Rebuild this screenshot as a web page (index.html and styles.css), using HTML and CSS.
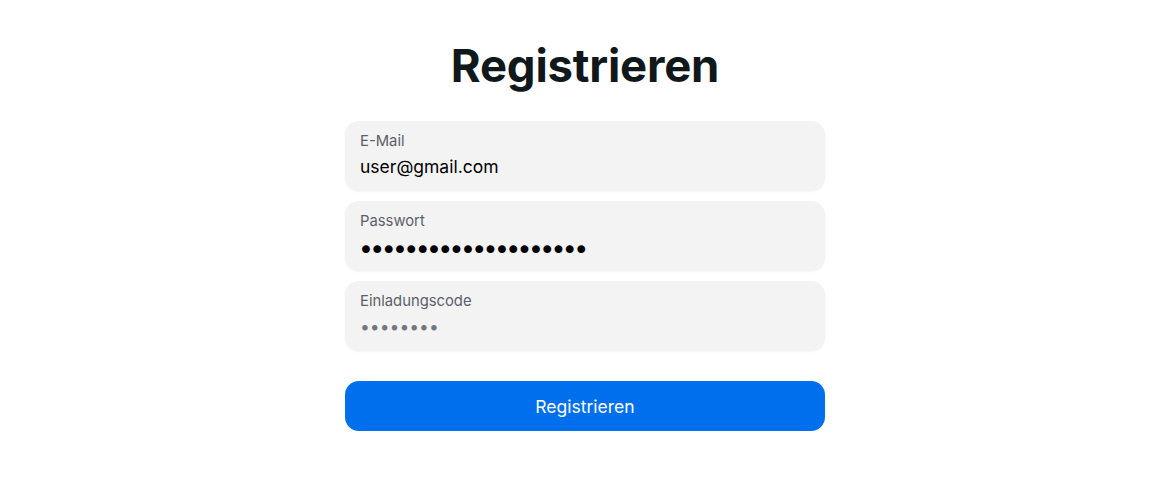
FILE: index.html
```html
<!DOCTYPE html>
<html lang="de">
<head>
<meta charset="utf-8">
<title>Registrieren</title>
<link rel="stylesheet" href="styles.css">
</head>
<body>
<main class="page">
  <form class="form">
    <h1 class="title">Registrieren</h1>
    <label class="field">
      <span class="label">E-Mail</span>
      <input class="input" type="email" value="user@gmail.com">
    </label>
    <label class="field">
      <span class="label">Passwort</span>
      <input class="input input-password" type="password" value="abcdefghijklmnopqrst">
    </label>
    <label class="field">
      <span class="label">Einladungscode</span>
      <input class="input" type="text" placeholder="••••••••">
    </label>
    <button class="button" type="button">Registrieren</button>
  </form>
</main>
</body>
</html>
```

FILE: styles.css
```css
* { box-sizing: border-box; }
html, body { margin: 0; padding: 0; background: #ffffff; }
body { font-family: Inter, "Noto Sans", sans-serif; }
.page {
  display: flex;
  justify-content: center;
  padding: 36px 0 0 13px;
}
.form {
  width: 480px;
  display: flex;
  flex-direction: column;
  gap: 10px;
}
.title {
  margin: 0 0 15px;
  text-align: center;
  font-size: 45.5px;
  font-weight: 700;
  line-height: 60px;
  color: #11181c;
  letter-spacing: -0.2px;
}
.field {
  display: flex;
  flex-direction: column;
  height: 70px;
  padding: 10px 15px 0;
  background: #f3f3f3;
  border-radius: 14px;
  box-shadow: 0 1px 2px rgba(0,0,0,0.05);
}
.label {
  font-size: 14.8px;
  line-height: 20px;
  color: #5b5f6b;
}
.input {
  border: 0;
  outline: 0;
  background: transparent;
  padding: 0;
  margin-top: 4px;
  font-family: inherit;
  font-size: 17.5px;
  line-height: 24px;
  height: 24px;
  color: #000;
}
.input-password {
  font-family: "DejaVu Sans", sans-serif;
  font-size: 27px;
  letter-spacing: -4.6px;
  margin-top: 6px;
  margin-left: -2px;
}
.input::placeholder { color: #74767e; }
.button {
  margin-top: 20px;
  height: 50px;
  border: 0;
  border-radius: 14px;
  background: #006fee;
  color: #fff;
  font-family: inherit;
  font-size: 17.5px;
}
```
